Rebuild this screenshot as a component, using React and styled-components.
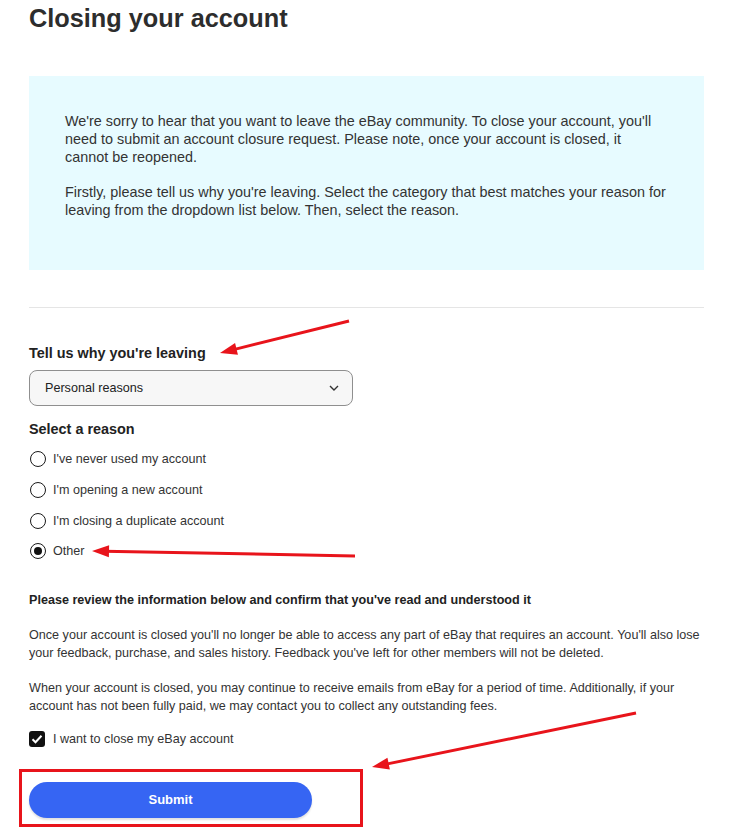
import styled, { createGlobalStyle } from "styled-components";

const GlobalStyle = createGlobalStyle`
  body {
    margin: 0;
    background: #fff;
    font-family: "Liberation Sans", Arial, sans-serif;
    color: #2b2b2b;
  }
`;

const reasons = [
  "I've never used my account",
  "I'm opening a new account",
  "I'm closing a duplicate account",
  "Other",
];

// arrow from (x1,y1) to tip (x2,y2)
const arrowHead = (x1, y1, x2, y2, len = 17, half = 6) => {
  const dx = x2 - x1;
  const dy = y2 - y1;
  const d = Math.hypot(dx, dy);
  const ux = dx / d;
  const uy = dy / d;
  const bx = x2 - ux * len;
  const by = y2 - uy * len;
  return `${x2},${y2} ${bx - uy * half},${by + ux * half} ${bx + uy * half},${by - ux * half}`;
};

const arrows = [
  [349, 321, 220, 353],
  [355, 556, 92, 551],
  [636, 713, 372, 767],
];

const App = () => {
  return (
    <Page>
      <GlobalStyle />
      <Title>Closing your account</Title>
      <InfoBox>
        <p>
          We're sorry to hear that you want to leave the eBay community. To close your account, you'll
          need to submit an account closure request. Please note, once your account is closed, it
          cannot be reopened.
        </p>
        <p>
          Firstly, please tell us why you're leaving. Select the category that best matches your reason for
          leaving from the dropdown list below. Then, select the reason.
        </p>
      </InfoBox>
      <Divider />

      <FieldLabel>Tell us why you're leaving</FieldLabel>
      <SelectBox>
        <span>Personal reasons</span>
        <svg width="10" height="6" viewBox="0 0 10 6">
          <path d="M1 1l4 4 4-4" fill="none" stroke="#333" strokeWidth="1.4" />
        </svg>
      </SelectBox>

      <FieldLabel $top={14}>Select a reason</FieldLabel>
      <RadioList>
        {reasons.map((r) => (
          <RadioRow key={r}>
            <Radio $checked={r === "Other"} />
            {r}
          </RadioRow>
        ))}
      </RadioList>

      <ReviewTitle>Please review the information below and confirm that you've read and understood it</ReviewTitle>
      <Body>
        Once your account is closed you'll no longer be able to access any part of eBay that requires an account. You'll also lose
        your feedback, purchase, and sales history. Feedback you've left for other members will not be deleted.
      </Body>
      <Body>
        When your account is closed, you may continue to receive emails from eBay for a period of time. Additionally, if your
        account has not been fully paid, we may contact you to collect any outstanding fees.
      </Body>

      <CheckRow>
        <CheckBox>
          <svg width="12" height="10" viewBox="0 0 12 10">
            <path d="M1.5 5.2l3 3 6-6.5" fill="none" stroke="#fff" strokeWidth="2" />
          </svg>
        </CheckBox>
        I want to close my eBay account
      </CheckRow>

      <SubmitButton>Submit</SubmitButton>

      <Annotations width="732" height="833">
        {arrows.map(([x1, y1, x2, y2], i) => {
          const d = Math.hypot(x2 - x1, y2 - y1);
          const ex = x2 - ((x2 - x1) / d) * 12;
          const ey = y2 - ((y2 - y1) / d) * 12;
          return (
            <g key={i}>
              <line x1={x1} y1={y1} x2={ex} y2={ey} stroke="#e8141b" strokeWidth="3" />
              <polygon points={arrowHead(x1, y1, x2, y2)} fill="#e8141b" />
            </g>
          );
        })}
        <rect x="20.5" y="770.5" width="341" height="55" fill="none" stroke="#e8141b" strokeWidth="3" />
      </Annotations>
    </Page>
  );
};

const Page = styled.div`
  position: relative;
  width: 732px;
  height: 833px;
  box-sizing: border-box;
  padding: 3px 28px 0 29px;
  overflow: hidden;
`;

const Title = styled.h1`
  margin: 0;
  font-size: 25.3px;
  line-height: 30px;
  font-weight: 700;
  color: #2d2d2d;
`;

const InfoBox = styled.div`
  margin-top: 43px;
  height: 194px;
  box-sizing: border-box;
  background: #e7fbff;
  padding: 36px 36px 0 36px;
  font-size: 14.4px;
  line-height: 18px;
  color: #333;

  p {
    margin: 0 0 17px;
  }
`;

const Divider = styled.hr`
  margin: 37px 0 0;
  border: none;
  border-top: 1px solid #e5e5e5;
`;

const FieldLabel = styled.div`
  margin-top: ${(p) => p.$top ?? 36}px;
  font-size: 14.4px;
  line-height: 18px;
  font-weight: 700;
  color: #222;
`;

const SelectBox = styled.div`
  margin-top: 8px;
  width: 324px;
  height: 36px;
  box-sizing: border-box;
  display: flex;
  align-items: center;
  justify-content: space-between;
  padding: 0 13px 0 15px;
  background: #f7f7f7;
  border: 1px solid #8f8f8f;
  border-radius: 8px;
  font-size: 12.6px;
  color: #222;
`;

const RadioList = styled.div`
  margin-top: 6px;
  display: flex;
  flex-direction: column;
`;

const RadioRow = styled.div`
  height: 30.7px;
  display: flex;
  align-items: center;
  gap: 7px;
  font-size: 12.6px;
  color: #333;
`;

const Radio = styled.span`
  width: 16px;
  height: 16px;
  box-sizing: border-box;
  margin-left: 1px;
  border-radius: 50%;
  border: 1.5px solid #1a1a1a;
  display: flex;
  align-items: center;
  justify-content: center;

  &::after {
    content: "";
    display: ${(p) => (p.$checked ? "block" : "none")};
    width: 8px;
    height: 8px;
    border-radius: 50%;
    background: #111;
  }
`;

const ReviewTitle = styled.div`
  margin-top: 24px;
  font-size: 12.6px;
  line-height: 18px;
  font-weight: 700;
  color: #222;
`;

const Body = styled.p`
  margin: 17px 0 0;
  font-size: 12.6px;
  line-height: 18px;
  color: #333;
`;

const CheckRow = styled.div`
  margin-top: 12px;
  height: 24px;
  display: flex;
  align-items: center;
  gap: 8px;
  font-size: 12.6px;
  color: #333;
`;

const CheckBox = styled.span`
  width: 16px;
  height: 16px;
  border-radius: 3px;
  background: #111;
  display: flex;
  align-items: center;
  justify-content: center;
`;

const SubmitButton = styled.button`
  margin-top: 31px;
  display: block;
  width: 283px;
  height: 36px;
  border: none;
  border-radius: 18px;
  background: #3665f3;
  color: #fff;
  font-family: inherit;
  font-size: 13px;
  font-weight: 700;
  box-shadow: 0 2px 2px rgba(0, 0, 0, 0.12);
`;

const Annotations = styled.svg`
  position: absolute;
  top: 0;
  left: 0;
  pointer-events: none;
`;

export default App;
